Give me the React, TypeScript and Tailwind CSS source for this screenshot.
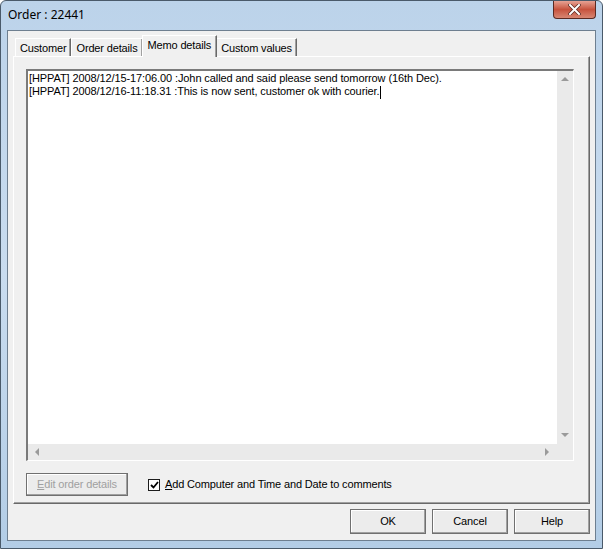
import React from 'react'

const tabs = ['Customer', 'Order details', 'Memo details', 'Custom values']

const memo = [
  '[HPPAT] 2008/12/15-17:06.00 :John called and said please send tomorrow (16th Dec).',
  '[HPPAT] 2008/12/16-11:18.31 :This is now sent, customer ok with courier.',
]

const Arrow: React.FC<{ dir: 'up' | 'down' | 'left' | 'right' }> = ({ dir }) => {
  const pts = {
    up: '0,4 4,0 8,4',
    down: '0,0 8,0 4,4',
    left: '4,0 4,8 0,4',
    right: '0,0 0,8 4,4',
  }[dir]
  const horiz = dir === 'left' || dir === 'right'
  return (
    <svg width={horiz ? 5 : 9} height={horiz ? 9 : 5} viewBox={horiz ? '0 0 5 9' : '0 0 9 5'}>
      <polygon points={pts} fill="#9a9a9a" />
    </svg>
  )
}

const WinButton: React.FC<{ label: React.ReactNode; disabled?: boolean; className?: string }> = ({ label, disabled, className }) => (
  <div className={`flex items-center justify-center border border-[#707070] shadow-[inset_-1px_-1px_0_#a0a0a0,inset_1px_1px_0_#ffffff] bg-[#ececec] text-[11px] tracking-[-0.15px] ${disabled ? 'text-[#a0a0a0]' : 'text-black'} ${className ?? ''}`}>
    {label}
  </div>
)

export default function App() {
  return (
    <div className="w-[603px] h-[549px] flex flex-col bg-gradient-to-b from-[#bcd3ea] via-[#c9dcef] to-[#b3cde6] border border-[#4a5a6a] rounded-t-[6px] overflow-hidden font-['Liberation_Sans',Arial,sans-serif]">
      <div className="h-[29px] flex items-start shrink-0">
        <div className="pl-[7px] pt-[5px] text-[12px] text-black font-['Noto_Sans',sans-serif]">Order : 22441</div>
        <div className="ml-auto mr-[6px] w-[43px] h-[18px] rounded-b-[4px] border border-t-0 border-[#5a2a22] bg-gradient-to-b from-[#e6a294] via-[#c6523d] to-[#d78672] flex items-center justify-center">
          <svg width="13" height="11" viewBox="0 0 13 11">
            <path d="M2 1 L11 10 M11 1 L2 10" stroke="#5a2a22" strokeWidth="3.4" strokeLinecap="square" />
            <path d="M2 1 L11 10 M11 1 L2 10" stroke="#ffffff" strokeWidth="2" strokeLinecap="square" />
          </svg>
        </div>
      </div>

      <div className="mx-[6px] mb-[7px] flex-1 flex flex-col bg-[#f0f0f0] border border-[#6e7f90] pt-[4px] px-[5px]">
        <div className="flex items-end h-[21px] pl-[2px] leading-[13px] tracking-[-0.15px]">
          {tabs.map((t, i) => {
            const active = i === 2
            return (
              <div
                key={t}
                className={`text-[11px] border-l border-t border-white shadow-[inset_-1px_0_0_#a0a0a0] border-r border-r-[#696969] ${active ? 'h-[22px] pt-[3px] -mx-[1px] z-10 bg-[#f0f0f0] relative -mb-[1px] px-[5px]' : 'h-[18px] pt-[3px] px-[4px]'}`}
              >
                {t}
              </div>
            )
          })}
        </div>

        <div className="h-[448px] border-l border-t border-white border-r border-b border-r-[#696969] border-b-[#696969] shadow-[inset_-1px_-1px_0_#a0a0a0] flex flex-col pt-[12px] pl-[12px] pr-[15px]">
          <div className="h-[392px] border-l-2 border-t-2 border-[#7a7a7a] border-r border-b border-r-white border-b-white bg-white flex flex-col">
            <div className="flex-1 flex min-h-0">
              <div className="flex-1 pl-[1px] pt-[1px] text-[11px] leading-[13px] tracking-[-0.1px] text-black">
                {memo.map((l, i) => (
                  <div key={i} className="whitespace-nowrap">
                    {l}
                    {i === memo.length - 1 && <span className="inline-block w-[1px] h-[13px] bg-black align-middle ml-[1px]" />}
                  </div>
                ))}
              </div>
              <div className="w-[16px] bg-[#eaeaea] flex flex-col items-center justify-between py-[6px]">
                <Arrow dir="up" />
                <Arrow dir="down" />
              </div>
            </div>
            <div className="h-[16px] flex">
              <div className="flex-1 bg-[#eaeaea] flex items-center justify-between px-[7px]">
                <Arrow dir="left" />
                <Arrow dir="right" />
              </div>
              <div className="w-[16px] bg-[#eaeaea]" />
            </div>
          </div>

          <div className="flex items-center mt-[12px]">
            <WinButton
              label={<span><span className="underline">E</span>dit order details</span>}
              disabled
              className="w-[102px] h-[23px]"
            />
            <div className="ml-[20px] w-[12px] h-[12px] border border-[#1c1c1c] bg-white flex items-center justify-center">
              <svg width="9" height="8" viewBox="0 0 9 8">
                <path d="M1 4 L3.5 6.5 L8 1" stroke="#000" strokeWidth="1.8" fill="none" />
              </svg>
            </div>
            <div className="ml-[5px] text-[11px] tracking-[-0.15px] text-black -mt-[1px]">
              <span className="underline">A</span>dd Computer and Time and Date to comments
            </div>
          </div>
        </div>

        <div className="flex justify-end gap-[6px] mt-[5px]">
          <WinButton label="OK" className="w-[76px] h-[25px] border-[#3c3c3c]" />
          <WinButton label="Cancel" className="w-[76px] h-[25px]" />
          <WinButton label="Help" className="w-[76px] h-[25px]" />
        </div>
      </div>
    </div>
  )
}
